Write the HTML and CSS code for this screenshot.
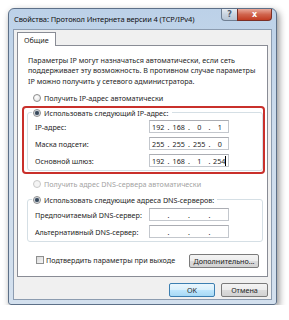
FILE: index.html
```html
<!DOCTYPE html>
<html lang="ru">
<head>
  <meta charset="UTF-8">
  <meta name="viewport" content="width=device-width, initial-scale=1.0">
  <title>Свойства: Протокол Интернета версии 4 (TCP/IPv4)</title>
  <link rel="stylesheet" href="styles.css">
</head>
<body>
  <div class="window">
    <div class="titlebar">
      <span class="title">Свойства: Протокол Интернета версии 4 (TCP/IPv4)</span>
      <div class="caption-btns">
        <span class="cap help">?</span>
        <span class="cap close">x</span>
      </div>
    </div>

    <div class="client">
      <div class="tabs">
        <span class="tab">Общие</span>
      </div>

      <div class="page">
        <p class="intro">Параметры IP могут назначаться автоматически, если сеть<br>поддерживает эту возможность. В противном случае параметры<br>IP можно получить у сетевого администратора.</p>

        <div class="option first"><span class="dot"></span>Получить IP-адрес автоматически</div>

        <div class="group ip-group">
          <div class="option legend"><span class="dot checked"></span>Использовать следующий IP-адрес:</div>
          <div class="row">
            <span class="lbl">IP-адрес:</span>
            <div class="ipfield"><span>192</span><i>.</i><span>168</span><i>.</i><span>0</span><i>.</i><span>1</span></div>
          </div>
          <div class="row">
            <span class="lbl">Маска подсети:</span>
            <div class="ipfield"><span>255</span><i>.</i><span>255</span><i>.</i><span>255</span><i>.</i><span>0</span></div>
          </div>
          <div class="row">
            <span class="lbl">Основной шлюз:</span>
            <div class="ipfield"><span>192</span><i>.</i><span>168</span><i>.</i><span>1</span><i>.</i><span><b class="caret">254</b></span></div>
          </div>
        </div>

        <div class="option disabled"><span class="dot"></span>Получить адрес DNS-сервера автоматически</div>

        <div class="group dns-group">
          <div class="option legend"><span class="dot checked"></span>Использовать следующие адреса DNS-серверов:</div>
          <div class="row">
            <span class="lbl">Предпочитаемый DNS-сервер:</span>
            <div class="ipfield"><span></span><i>.</i><span></span><i>.</i><span></span><i>.</i><span></span></div>
          </div>
          <div class="row">
            <span class="lbl">Альтернативный DNS-сервер:</span>
            <div class="ipfield"><span></span><i>.</i><span></span><i>.</i><span></span><i>.</i><span></span></div>
          </div>
        </div>

        <div class="bottom-row">
          <div class="check"><span class="box"></span>Подтвердить параметры при выходе</div>
          <button class="btn advanced">Дополнительно...</button>
        </div>

        <!-- annotation frame drawn over the IP block -->
        <div class="highlight"></div>
      </div>

      <div class="dialog-btns">
        <button class="btn default">OK</button>
        <button class="btn">Отмена</button>
      </div>
    </div>
  </div>
</body>
</html>
```

FILE: styles.css
```css
body {
  margin: 0;
  background: #fff;
  font-family: "Noto Sans", "Open Sans", sans-serif;
  font-size: 7.2px;
  color: #1e1e1e;
}

.window {
  box-sizing: border-box;
  width: 269px;
  height: 297px;
  margin: 8px 0 0 8px;
  padding: 0 4px 4px 4px;
  border: 1px solid #5d7088;
  border-radius: 6px 6px 3px 3px;
  background: linear-gradient(#bcd1e8, #cddcec 40%, #d3e0ee);
  box-shadow: 2px 3px 7px rgba(0, 0, 0, 0.45);
  display: flex;
  flex-direction: column;
}

.titlebar {
  height: 20px;
  display: flex;
  justify-content: space-between;
  align-items: flex-start;
}

.title {
  padding: 5px 0 0 1px;
  font-size: 7.5px;
  letter-spacing: -0.1px;
  white-space: nowrap;
  color: #111;
}

.caption-btns {
  display: flex;
}

.cap {
  height: 11px;
  display: flex;
  align-items: center;
  justify-content: center;
  color: #fff;
  font-family: "DejaVu Sans", sans-serif;
  font-weight: bold;
  font-size: 8px;
  border: 1px solid #6f7f93;
  border-top: none;
}

.help {
  width: 15px;
  border-radius: 0 0 0 4px;
  background: linear-gradient(#e6ecf3, #c9d4e0 50%, #b7c5d5);
  color: #4d5e73;
  border-right: none;
}

.close {
  width: 33px;
  border-radius: 0 0 4px 0;
  border-color: #7a2f26;
  background: linear-gradient(#e9a99b, #d0644d 50%, #c23c22);
}

.client {
  flex: 1;
  background: #f0f0f0;
  border: 1px solid #8c9cb0;
  display: flex;
  flex-direction: column;
}

.tabs {
  display: flex;
  margin: 2px 3px 0 3px;
}

.tab {
  position: relative;
  z-index: 1;
  height: 13px;
  padding: 0 6px;
  margin-bottom: -1px;
  background: #fff;
  border: 1px solid #898c95;
  border-bottom: none;
  display: flex;
  align-items: center;
}

.page {
  position: relative;
  box-sizing: border-box;
  height: 232px;
  margin: 0 3px;
  padding-top: 8.75px;
  background: #fff;
  border: 1px solid #898c95;
}

.intro {
  margin: 0;
  padding: 0 4px 0 10px;
  line-height: 10.5px;
  white-space: nowrap;
}

.option {
  height: 12px;
  line-height: 12px;
  padding-left: 15px;
  white-space: nowrap;
}

.option.first {
  margin-top: 5.75px;
}

.option.disabled {
  margin-top: 7px;
  color: #a3a3a3;
}

.dot {
  box-sizing: border-box;
  display: inline-block;
  vertical-align: -1px;
  width: 8px;
  height: 8px;
  margin-right: 3px;
  border-radius: 50%;
  border: 1px solid #8d8d8d;
  background: radial-gradient(circle at 40% 35%, #fff, #dedede);
}

.disabled .dot {
  border-color: #c8c8c8;
  background: #f4f4f4;
}

.dot.checked {
  background: radial-gradient(circle, #2d3a48 0, #4b5d70 1.8px, #dfe3e8 2.6px, #f6f6f6);
}

.group {
  margin: 8px 4px 0 9px;
  padding-bottom: 3px;
  border: 1px solid #d5dfe5;
  border-radius: 3px;
  display: flex;
  flex-direction: column;
  gap: 4px;
}

.dns-group {
  margin-top: 9px;
}

.group .legend {
  align-self: flex-start;
  margin: -6px 0 -3px 4px;
  padding: 0 3px 0 1px;
  background: #fff;
}

.dns-group .legend {
  margin-bottom: -2px;
}

.row {
  height: 13px;
  display: flex;
  align-items: center;
  padding-left: 7px;
}

.lbl {
  width: 114px;
}

.ipfield {
  box-sizing: border-box;
  width: 80px;
  height: 13px;
  border: 1px solid #c3c7cd;
  border-top-color: #abadb3;
  background: #fff;
  display: flex;
  align-items: center;
}

.ipfield span {
  width: 17px;
  text-align: center;
}

.ipfield i {
  width: 4px;
  font-style: normal;
  text-align: center;
}

.caret {
  font-weight: normal;
  border-right: 1px solid #000;
  line-height: 9px;
}

.bottom-row {
  margin-top: 12px;
  height: 14px;
  display: flex;
  align-items: center;
  justify-content: space-between;
  padding: 0 8px 0 18px;
}

.check {
  display: flex;
  align-items: center;
  margin-top: -3px;
}

.box {
  box-sizing: border-box;
  flex: none;
  width: 8px;
  height: 8px;
  margin-right: 2px;
  border: 1px solid #8e8f8f;
  background: linear-gradient(135deg, #d9d9d9, #f7f7f7);
}

.btn {
  box-sizing: border-box;
  height: 14px;
  padding: 0;
  font-family: inherit;
  font-size: 7.2px;
  color: #1e1e1e;
  border: 1px solid #7b7b7b;
  border-radius: 2px;
  background: linear-gradient(#f4f4f4, #ececec 50%, #dcdcdc 51%, #d2d2d2);
}

.advanced {
  width: 70px;
}

.highlight {
  position: absolute;
  left: 4px;
  top: 60px;
  width: 243px;
  height: 68px;
  box-sizing: border-box;
  border: 2.5px solid #c9302b;
  border-radius: 4px;
}

.dialog-btns {
  display: flex;
  justify-content: flex-end;
  gap: 6px;
  margin: 6px 3px 0 0;
}

.dialog-btns .btn {
  width: 47px;
}

.btn.default {
  width: 46px;
  border-color: #3c7fb1;
  background: linear-gradient(#eaf6fd, #d9f0fc 50%, #bee6fd 51%, #a7d9f5);
}
```
